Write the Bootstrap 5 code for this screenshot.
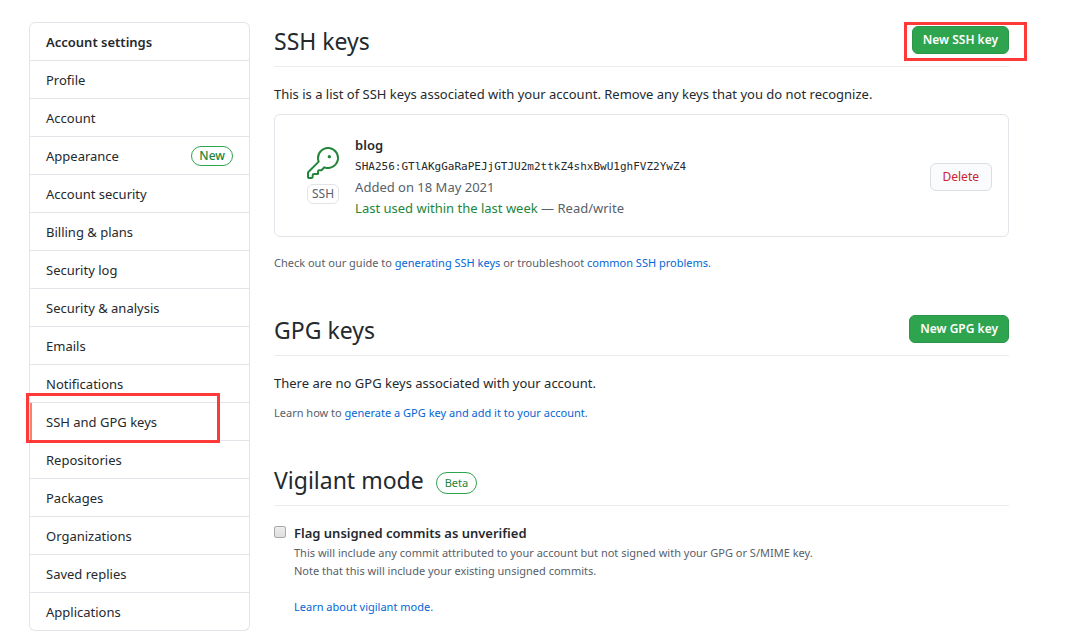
<!DOCTYPE html>
<html lang="en">
<head>
<meta charset="utf-8">
<meta name="viewport" content="width=device-width, initial-scale=1">
<title>SSH and GPG keys</title>
<link rel="stylesheet" href="https://cdn.jsdelivr.net/npm/bootstrap@5.3.0/dist/css/bootstrap.min.css">
<style>
  body { font: 13px/21px "Segoe UI", "Noto Sans", "Open Sans", sans-serif; color: #24292e; background: #fff; }
  a { color: #0366d6; text-decoration: none; }
  .settings-page { max-width: 1033px; padding: 22px 24px 10px 29px; }
  .settings-side { width: 221px; }
  .settings-main { max-width: 735px; min-width: 0; }
  .settings-menu { --bs-list-group-border-color: #e1e4e8; --bs-list-group-border-radius: 6px; }
  .settings-menu .list-group-item { color: #24292e; padding: 9px 16px 7px; }
  .settings-menu .current { box-shadow: inset 2px 0 #f9826c; }
  .outline-pill { border: 1px solid #2ea44f; color: #22863a; border-radius: 20px; font-size: 12px; line-height: 18px; padding: 0 7px; margin: -1px 0 1px; font-weight: 500; }
  .beta-pill { font-size: 11px; font-weight: 400; line-height: 20px; padding: 0 8px; margin: 7px 0 0 12px; }
  .settings-section { margin-bottom: 43px; }
  .section-head { border-bottom: 1px solid #eaecef; min-height: 41px; padding-bottom: 8px; margin-bottom: 17px; }
  .section-head h2 { font-size: 23px; line-height: 30px; font-weight: 400; margin: 0; }
  .intro { margin-bottom: 9px; }
  .btn-key { --bs-btn-font-size: 12px; --bs-btn-line-height: 18px; --bs-btn-padding-y: 4px; --bs-btn-padding-x: 12px; --bs-btn-border-radius: 6px; }
  .btn-create { --bs-btn-color: #fff; --bs-btn-bg: #2ea44f; --bs-btn-border-color: #2b9649; --bs-btn-font-weight: 600; --bs-btn-padding-x: 10px;
    --bs-btn-hover-color: #fff; --bs-btn-hover-bg: #2c974b; }
  .btn-remove { --bs-btn-color: #cb2431; --bs-btn-bg: #fafbfc; --bs-btn-border-color: #dcdee0; --bs-btn-font-weight: 400;
    --bs-btn-hover-color: #fff; --bs-btn-hover-bg: #cb2431; }
  .key-card { border: 1px solid #e1e4e8; border-radius: 6px; padding: 20px 16px 17px 32px; }
  .key-side { margin: 0 16px 3px 0; }
  .key-tag { border: 1px solid #e1e4e8; border-radius: 6px; color: #586069; font-size: 12px; line-height: 18px; padding: 0 4px; margin-top: 5px; }
  .fingerprint { font: 11px/21px "DejaVu Sans Mono", monospace; color: #24292e; overflow-wrap: anywhere; }
  .muted { color: #586069; }
  .used { color: #22863a; }
  .note { font-size: 11px; line-height: 18px; color: #586069; margin-bottom: 0; }
  .note-hint { margin-top: 10px; }
  .note-below { margin-top: 17px; }
  .note-gap { margin-top: 18px; }
  .flag-box { appearance: none; width: 12px; height: 12px; margin: 3px 0 0; border: 1px solid #a9a9a9; border-radius: 2px; background: linear-gradient(#ededed, #dedede); }
  .flag-box:checked { background: #0366d6; }
  .red-mark { position: absolute; border: 3px solid #ff3838; pointer-events: none; z-index: 3; }
  .mark-menu { inset: -10px 29px -3px -4px; }
  .mark-button { inset: -4px -18px -7px -8px; }
</style>
</head>
<body>
<div class="settings-page d-flex gap-4">
  <nav class="settings-side flex-shrink-0" aria-label="Account settings">
    <div class="list-group settings-menu">
      <div class="list-group-item fw-semibold">Account settings</div>
      <a href="#" class="list-group-item">Profile</a>
      <a href="#" class="list-group-item">Account</a>
      <a href="#" class="list-group-item d-flex justify-content-between align-items-center">Appearance <span class="outline-pill">New</span></a>
      <a href="#" class="list-group-item">Account security</a>
      <a href="#" class="list-group-item">Billing &amp; plans</a>
      <a href="#" class="list-group-item">Security log</a>
      <a href="#" class="list-group-item">Security &amp; analysis</a>
      <a href="#" class="list-group-item">Emails</a>
      <a href="#" class="list-group-item">Notifications</a>
      <a href="#" class="list-group-item current" aria-current="page">SSH and GPG keys<span class="red-mark mark-menu"></span></a>
      <a href="#" class="list-group-item">Repositories</a>
      <a href="#" class="list-group-item">Packages</a>
      <a href="#" class="list-group-item">Organizations</a>
      <a href="#" class="list-group-item">Saved replies</a>
      <a href="#" class="list-group-item">Applications</a>
    </div>
  </nav>
  <main class="settings-main flex-grow-1">
    <section class="settings-section pt-1">
      <div class="section-head d-flex justify-content-between align-items-start">
        <h2>SSH keys</h2>
        <div class="position-relative"><button type="button" class="btn btn-key btn-create d-block">New SSH key</button><span class="red-mark mark-button"></span></div>
      </div>
      <p class="intro">This is a list of SSH keys associated with your account. Remove any keys that you do not recognize.</p>
      <div class="key-card d-flex align-items-center">
        <div class="key-side d-flex flex-column align-items-center">
          <svg width="32" height="32" viewBox="0 0 24 24" fill="#22863a" role="img" aria-label="Key"><path d="M16.75 8.5a1.25 1.25 0 100-2.5 1.25 1.25 0 000 2.5z"/><path fill-rule="evenodd" d="M15.75 0a8.25 8.25 0 00-7.851 10.79L.513 18.178A1.75 1.75 0 000 19.414v2.836C0 23.217.784 24 1.75 24h1.5A1.75 1.75 0 005 22.25v-1a.25.25 0 01.25-.25h2.735a.75.75 0 00.545-.22l.214-.213A.875.875 0 009 19.948V18.5a.25.25 0 01.25-.25h1.086c.464 0 .91-.184 1.237-.513l1.636-1.636A8.25 8.25 0 1015.75 0zM9 8.25a6.75 6.75 0 114.288 6.287.75.75 0 00-.804.168l-1.971 1.972a.25.25 0 01-.177.073H9.25A1.75 1.75 0 007.5 18.5v1H5.25a1.75 1.75 0 00-1.75 1.75v1a.25.25 0 01-.25.25h-1.5a.25.25 0 01-.25-.25v-2.836a.25.25 0 01.073-.177l7.722-7.721a.75.75 0 00.168-.804A6.73 6.73 0 019 8.25z"/></svg>
          <span class="key-tag">SSH</span>
        </div>
        <div class="flex-grow-1">
          <strong class="d-block fw-semibold">blog</strong>
          <code class="fingerprint d-block">SHA256:GTlAKgGaRaPEJjGTJU2m2ttkZ4shxBwU1ghFVZ2YwZ4</code>
          <span class="d-block muted">Added on 18 May 2021</span>
          <span class="d-block muted"><span class="used">Last used within the last week</span> — Read/write</span>
        </div>
        <button type="button" class="btn btn-key btn-remove">Delete</button>
      </div>
      <p class="note note-below">Check out our guide to <a href="#">generating SSH keys</a> or troubleshoot <a href="#">common SSH problems</a>.</p>
    </section>
    <section class="settings-section">
      <div class="section-head d-flex justify-content-between align-items-start">
        <h2>GPG keys</h2>
        <button type="button" class="btn btn-key btn-create">New GPG key</button>
      </div>
      <p class="intro">There are no GPG keys associated with your account.</p>
      <p class="note note-hint">Learn how to <a href="#">generate a GPG key and add it to your account</a>.</p>
    </section>
    <section>
      <div class="section-head d-flex align-items-start">
        <h2>Vigilant mode</h2>
        <span class="outline-pill beta-pill">Beta</span>
      </div>
      <div class="d-flex gap-2">
        <input type="checkbox" class="flag-box flex-shrink-0" id="flagUnsigned">
        <div>
          <label class="fw-semibold d-block" for="flagUnsigned">Flag unsigned commits as unverified</label>
          <p class="note">This will include any commit attributed to your account but not signed with your GPG or S/MIME key.<br>Note that this will include your existing unsigned commits.</p>
          <p class="note note-gap"><a href="#">Learn about vigilant mode.</a></p>
        </div>
      </div>
    </section>
  </main>
</div>
<script src="https://cdn.jsdelivr.net/npm/bootstrap@5.3.0/dist/js/bootstrap.bundle.min.js"></script>
</body>
</html>
